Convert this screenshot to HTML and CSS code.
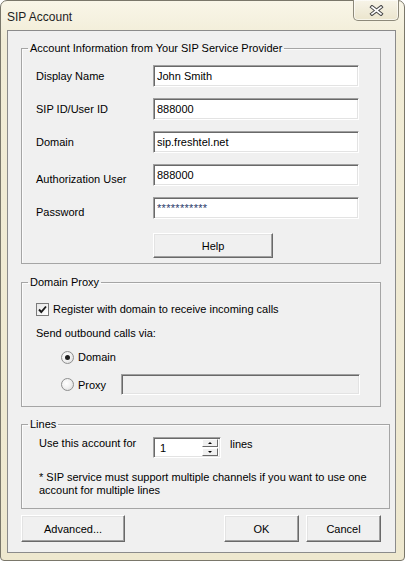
FILE: index.html
```html
<!DOCTYPE html>
<html lang="en">
<head>
  <meta charset="UTF-8">
  <title>SIP Account</title>
  <link rel="stylesheet" href="styles.css">
</head>
<body>
  <div class="window">
    <div class="titlebar">
      <span class="title">SIP Account</span>
      <button class="close" title="Close">
        <svg width="15" height="11" viewBox="0 0 15 11">
          <path d="M3 2 L12 9 M12 2 L3 9" stroke="#4a4a4a" stroke-width="3.6" stroke-linecap="square"/>
          <path d="M3 2 L12 9 M12 2 L3 9" stroke="#fff" stroke-width="1.6" stroke-linecap="square"/>
        </svg>
      </button>
    </div>

    <div class="client">
      <fieldset class="group">
        <legend>Account Information from Your SIP Service Provider</legend>
        <div class="account-form">
          <label>Display Name</label>
          <input class="field" type="text" value="John Smith">
          <label>SIP ID/User ID</label>
          <input class="field" type="text" value="888000">
          <label>Domain</label>
          <input class="field" type="text" value="sip.freshtel.net">
          <label class="low">Authorization User</label>
          <input class="field" type="text" value="888000">
          <label class="low">Password</label>
          <input class="field secret" type="text" value="***********">
          <span></span>
          <button class="btn help">Help</button>
        </div>
      </fieldset>

      <fieldset class="group proxy">
        <legend>Domain Proxy</legend>
        <div class="proxy-body">
          <div class="check-row">
            <span class="check">
              <svg width="11" height="11" viewBox="0 0 11 11"><path d="M2 5.5 L4.3 8 L9 2.5" fill="none" stroke="#1a1a1a" stroke-width="1.9"/></svg>
            </span>
            Register with domain to receive incoming calls
          </div>
          <div class="text-row">Send outbound calls via:</div>
          <div class="radio-row">
            <span class="radio on"></span>
            <span class="radio-label">Domain</span>
          </div>
          <div class="radio-row">
            <span class="radio"></span>
            <span class="radio-label">Proxy</span>
            <input class="field disabled" type="text" disabled>
          </div>
        </div>
      </fieldset>

      <fieldset class="group lines">
        <legend>Lines</legend>
        <div class="lines-body">
          <div class="spin-row">
            <span class="spin-label">Use this account for</span>
            <div class="spin">
              <span class="spin-value">1</span>
              <div class="spin-buttons">
                <span class="spin-btn up"></span>
                <span class="spin-btn down"></span>
              </div>
            </div>
            <span class="spin-unit">lines</span>
          </div>
          <p class="note">* SIP service must support multiple channels if you want to use one account for multiple lines</p>
        </div>
      </fieldset>

      <div class="actions">
        <button class="btn advanced">Advanced...</button>
        <span class="spacer"></span>
        <button class="btn dialog">OK</button>
        <button class="btn dialog">Cancel</button>
      </div>
    </div>
  </div>
</body>
</html>
```

FILE: styles.css
```css
body {
  margin: 0;
  font-family: 'Liberation Sans', Arial, sans-serif;
  font-size: 11px;
  color: #000;
  background: #fff;
}
.window {
  width: 405px;
  height: 561px;
  box-sizing: border-box;
  border: 1px solid #7a776a;
  border-radius: 7px 7px 4px 4px;
  padding: 0 8px 7px 6px;
  background: linear-gradient(to bottom, #f9f6e8 0, #f1ecd6 40px, #eee8cf 100%);
  display: flex;
  flex-direction: column;
}
.titlebar {
  height: 29px;
  display: flex;
  align-items: flex-start;
  justify-content: space-between;
}
.title {
  font-size: 12px;
  margin-top: 9px;
  color: #1e1e1e;
}
.close {
  width: 46px;
  height: 21px;
  margin: -1px -3px 0 0;
  padding: 0;
  border: 1px solid #8d897a;
  border-top: none;
  border-radius: 0 0 5px 5px;
  background: linear-gradient(to bottom, #f7f4e8, #ebe5cd);
  box-shadow: inset 0 0 0 1px rgba(255,255,255,0.6);
  display: flex;
  align-items: center;
  justify-content: center;
}

.client {
  flex: 1;
  border: 1px solid #8b8b8b;
  background: #f0f0f0;
  padding: 10px 14px 8px 13px;
  display: flex;
  flex-direction: column;
}

.group {
  margin: 0;
  padding: 0;
  border: 1px solid #a5a5a5;
  box-shadow: inset 1px 1px #fbfbfb;
}
.group legend {
  margin-left: 6px;
  padding: 0 2px;
  line-height: 14px;
}
.proxy {
  margin-top: 11px;
}
.lines {
  margin-top: 10px;
}

.account-form {
  display: grid;
  grid-template-columns: 117px 206px;
  grid-template-rows: repeat(5, 22px) 28px;
  row-gap: 11px;
  padding: 10px 20px 5px 14px;
}
.account-form label {
  align-self: center;
  line-height: 14px;
}
.account-form label.low {
  align-self: end;
}
.field {
  box-sizing: border-box;
  height: 22px;
  margin: 0;
  padding: 0 3px;
  font: 11px 'Liberation Sans', Arial, sans-serif;
  color: #000;
  background: #fff;
  border: 1px solid;
  border-color: #a0a0a0 #fff #fff #a0a0a0;
  box-shadow: inset 1px 1px #696969, inset -1px -1px #e3e3e3;
  outline: none;
}
.field.secret {
  color: #2a3a6a;
  letter-spacing: 0.3px;
}
.field.disabled {
  width: 239px;
  height: 21px;
  background: #f0f0f0;
}

.btn {
  box-sizing: border-box;
  height: 27px;
  margin: 0;
  padding: 0;
  font: 11px 'Liberation Sans', Arial, sans-serif;
  color: #000;
  background: #f0f0f0;
  border: 1px solid;
  border-color: #fff #696969 #696969 #fff;
  box-shadow: inset -1px -1px #a0a0a0, inset 1px 1px #e3e3e3;
}
.btn.help {
  width: 120px;
  height: 25px;
  align-self: end;
}

.proxy-body {
  padding: 12px 20px 11px 14px;
  display: flex;
  flex-direction: column;
}
.check-row {
  height: 16px;
  display: flex;
  align-items: center;
  gap: 4px;
}
.check {
  box-sizing: border-box;
  width: 13px;
  height: 13px;
  border: 1px solid #7a7a7a;
  background: linear-gradient(135deg, #e6e6e6, #fff);
  display: flex;
  align-items: center;
  justify-content: center;
}
.text-row {
  margin-top: 9px;
  line-height: 14px;
}
.radio-row {
  margin-top: 10px;
  margin-left: 25px;
  display: flex;
  align-items: center;
  min-height: 14px;
}
.radio {
  box-sizing: border-box;
  width: 13px;
  height: 13px;
  border-radius: 50%;
  border: 1px solid #8e8f8f;
  background: radial-gradient(circle at 40% 40%, #fff 0, #f2f2f2 45%, #d6d6d6 100%);
  display: flex;
  align-items: center;
  justify-content: center;
}
.radio.on::after {
  content: "";
  width: 5px;
  height: 5px;
  border-radius: 50%;
  background: #1f1f1f;
}
.radio-label {
  margin-left: 4px;
  width: 43px;
}

.lines-body {
  padding: 6px 20px 11px 17px;
}
.spin-row {
  display: flex;
  align-items: center;
  height: 20px;
}
.spin-label {
  width: 114px;
  margin-top: -8px;
}
.spin {
  box-sizing: border-box;
  width: 68px;
  height: 21px;
  background: #fff;
  border: 1px solid;
  border-color: #a0a0a0 #fff #fff #a0a0a0;
  box-shadow: inset 1px 1px #696969, inset -1px -1px #e3e3e3;
  display: flex;
  align-items: center;
  justify-content: space-between;
  padding: 0 2px 0 6px;
}
.spin-value {
  margin-top: 2px;
}
.spin-buttons {
  display: flex;
  flex-direction: column;
  gap: 1px;
}
.spin-btn {
  box-sizing: border-box;
  width: 16px;
  height: 8px;
  background: #f0f0f0;
  border: 1px solid;
  border-color: #fff #696969 #696969 #fff;
  display: flex;
  align-items: center;
  justify-content: center;
}
.spin-btn::after {
  content: "";
  border-left: 2px solid transparent;
  border-right: 2px solid transparent;
}
.spin-btn.up::after {
  border-bottom: 2px solid #000;
}
.spin-btn.down::after {
  border-top: 2px solid #000;
}
.spin-unit {
  margin-left: 9px;
  margin-top: -6px;
}
.note {
  margin: 14px 0 0;
  line-height: 13px;
  width: 330px;
}

.actions {
  margin-top: 6px;
  display: flex;
  gap: 7px;
}
.spacer {
  flex: 1;
}
.btn.advanced {
  width: 104px;
}
.btn.dialog {
  width: 75px;
}
```
